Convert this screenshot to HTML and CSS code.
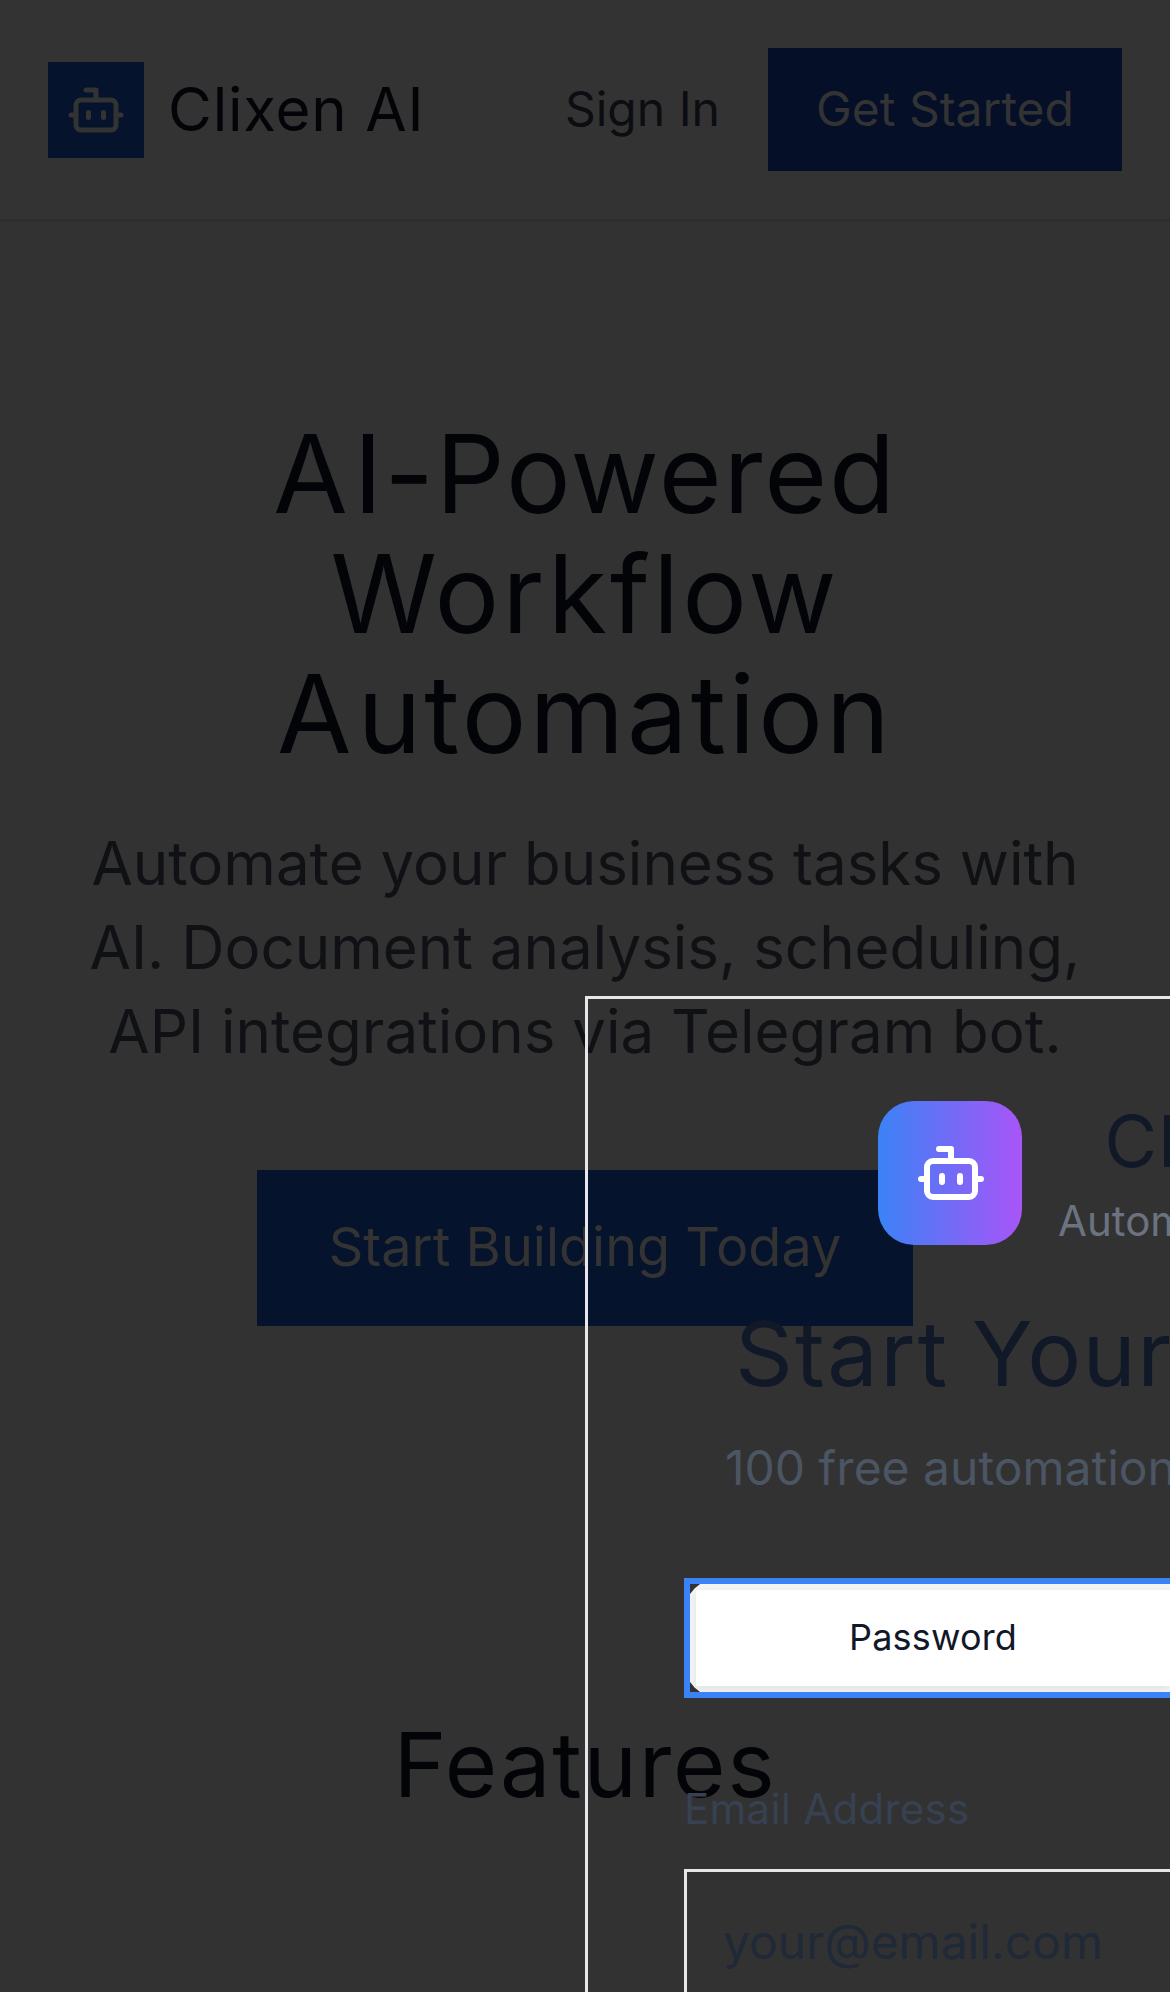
FILE: index.html
```html
<!DOCTYPE html>
<html lang="en">
<head>
<meta charset="utf-8">
<title>Clixen AI</title>
<link rel="stylesheet" href="styles.css">
</head>
<body>
<svg class="sprite" aria-hidden="true">
  <symbol id="bot" viewBox="0 0 24 24" fill="none" stroke="currentColor" stroke-width="2" stroke-linecap="round" stroke-linejoin="round">
    <path d="M12 8V4H8"/><rect x="4" y="8" width="16" height="12" rx="2"/><path d="M2 14h2M20 14h2M15 13v2M9 13v2"/>
  </symbol>
</svg>
<div class="page">
  <header class="header">
    <div class="brand">
      <span class="brand-mark"><svg><use href="#bot"/></svg></span>
      <span class="brand-name">Clixen AI</span>
    </div>
    <nav class="nav">
      <a class="sign-in">Sign In</a>
      <a class="get-started">Get Started</a>
    </nav>
  </header>
  <main>
    <section class="hero">
      <h1><span class="cap">A</span><span class="snug">I-Powered</span><br>Workflow<br><span class="cap">A</span>utomation</h1>
      <p>Automate your business tasks with<br>AI. Document analysis, scheduling,<br>API integrations via Telegram bot.</p>
      <a class="cta">Start Building Today</a>
    </section>
    <section class="features"><h2>Features</h2></section>
  </main>
</div>
<div class="modal">
  <div class="modal-brand">
    <span class="modal-mark"><svg><use href="#bot"/></svg></span>
    <div class="modal-names">
      <span class="modal-name">Clixen AI</span>
      <span class="modal-tag">Automation Platform</span>
    </div>
  </div>
  <h2 class="modal-title"><span class="wide">Start</span> Your Free Trial</h2>
  <p class="modal-sub">100 free automation credits included</p>
  <div class="tabs">
    <button class="tab">Password</button>
  </div>
  <label class="label">Email Address</label>
  <div class="field">your@email.com</div>
</div>
</body>
</html>
```
FILE: styles.css
```css
* { box-sizing: border-box; margin: 0; padding: 0; }
html, body { width: 1170px; height: 1992px; overflow: hidden; }
body { position: relative; background: #323232; font-family: Inter, sans-serif; font-weight: 400; font-optical-sizing: none; }
.sprite { position: absolute; width: 0; height: 0; }
.header { display: flex; align-items: center; justify-content: space-between; height: 222px; padding: 0 48px; border-bottom: 3px solid #2e2e2f; background: #333; }
.brand { display: flex; align-items: center; gap: 24px; }
.brand-mark { display: flex; align-items: center; justify-content: center; width: 96px; height: 96px; background: #05132d; color: #333; }
.brand-mark svg { width: 60px; height: 60px; }
.brand-name { padding-bottom: 2px; font-size: 60px; line-height: 84px; letter-spacing: 0.0135em; color: #030408; }
.nav { display: flex; align-items: center; gap: 48px; }
.sign-in { padding-bottom: 2px; font-size: 48px; color: #0b0d11; }
.get-started { height: 123px; padding: 0 48px; line-height: 121px; font-size: 48px; background: #050f28; color: #333; }
.hero { display: flex; flex-direction: column; align-items: center; padding-top: 192px; text-align: center; white-space: nowrap; }
h1, h2 { font-weight: 400; }
h1 { font-size: 108px; line-height: 120px; letter-spacing: 0.028em; color: #030408; }
.cap { letter-spacing: 0.054em; }
.snug { letter-spacing: 0.0165em; }
.hero p { margin-top: 47px; font-size: 60px; line-height: 84px; color: #0f1114; }
.cta { margin-top: 97px; height: 156px; padding: 0 72px; line-height: 154px; font-size: 54px; background: #05132d; color: #333; }
.features { padding-top: 379px; text-align: center; }
.features h2 { font-size: 90px; line-height: 120px; letter-spacing: 0.0205em; color: #030408; }
.modal { position: absolute; left: 585px; top: 996px; width: 1152px; height: 1400px; padding: 96px; border: 3px solid #e5e7eb; white-space: nowrap; }
.modal-brand { display: flex; align-items: center; gap: 36px; height: 156px; padding-left: 194px; }
.modal-mark { display: flex; align-items: center; justify-content: center; width: 144px; height: 144px; padding-left: 2px; border-radius: 36px; background: linear-gradient(90deg, #3b82f6, #a855f7); color: #fff; }
.modal-mark svg { width: 72px; height: 72px; }
.modal-names { display: flex; flex-direction: column; align-items: center; }
.modal-name { margin-bottom: 4px; font-size: 72px; line-height: 92px; letter-spacing: 0.019em; color: #111827; }
.modal-tag { font-size: 42px; line-height: 60px; color: #6b7280; }
.modal-title { margin-top: 49px; padding-left: 51px; font-size: 90px; line-height: 108px; letter-spacing: 0.015em; word-spacing: -0.05em; color: #111827; }
.wide { letter-spacing: 0.026em; }
.modal-sub { margin-top: 24px; padding-left: 41px; font-size: 48px; line-height: 72px; color: #4b5563; }
.tabs { position: relative; display: flex; margin-top: 74px; height: 120px; padding: 12px; border-radius: 36px; background: #f3f4f6; }
.tabs::after { content: ""; position: absolute; inset: 0; border: 6px solid #3b82f6; }
.tab { display: block; width: 474px; padding-bottom: 2px; border: 0; background: #fff; box-shadow: 0 3px 9px rgba(0, 0, 0, 0.08); font: inherit; font-optical-sizing: none; font-size: 36px; letter-spacing: 0.005em; color: #111827; }
.label { display: block; margin-top: 81px; font-size: 42px; line-height: 60px; letter-spacing: 0.006em; color: #374151; }
.field { margin-top: 30px; height: 150px; padding: 0 36px; border: 3px solid #e5e7eb; line-height: 139px; font-size: 48px; color: #1f2937; }
```
